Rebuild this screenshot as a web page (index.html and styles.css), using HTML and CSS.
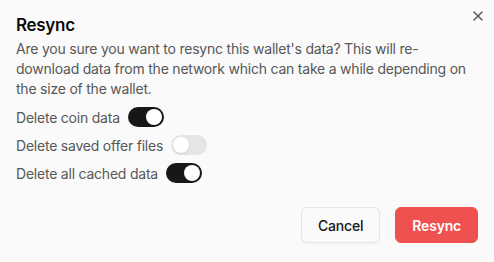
FILE: index.html
```html
<!DOCTYPE html>
<html>
<head>
<meta charset="utf-8">
<link rel="stylesheet" href="styles.css">
</head>
<body>
<div class="dialog">
  <button class="close" aria-label="Close">
    <svg width="16" height="16" viewBox="0 0 24 24" fill="none" stroke="currentColor" stroke-width="2" stroke-linecap="round" stroke-linejoin="round"><path d="M18 6 6 18"/><path d="m6 6 12 12"/></svg>
  </button>
  <h2 class="title">Resync</h2>
  <p class="desc">Are you sure you want to resync this wallet's data? This will re-download data from the network which can take a while depending on the size of the wallet.</p>
  <div class="options">
    <label class="row">Delete coin data <span class="switch on"><span class="thumb"></span></span></label>
    <label class="row">Delete saved offer files <span class="switch"><span class="thumb"></span></span></label>
    <label class="row">Delete all cached data <span class="switch on"><span class="thumb"></span></span></label>
  </div>
  <div class="footer">
    <button class="btn outline">Cancel</button>
    <button class="btn destructive">Resync</button>
  </div>
</div>
</body>
</html>
```
FILE: styles.css
```css
* { box-sizing: border-box; }
html, body { margin: 0; padding: 0; }
body {
  background: #fafafa;
  font-family: Inter, "Noto Sans", sans-serif;
  letter-spacing: -0.22px;
  width: 494px;
  height: 262px;
  overflow: hidden;
}
.dialog {
  position: relative;
  padding: 11px 16px 19px 16px;
  display: flex;
  flex-direction: column;
}
.close {
  position: absolute;
  top: 8px;
  right: 8px;
  width: 16px;
  height: 16px;
  padding: 0;
  border: 0;
  background: none;
  color: #555;
  display: flex;
}
.title {
  margin: 0;
  font-size: 17px;
  line-height: 28px;
  font-weight: 600;
  color: #0a0a0a;
  letter-spacing: -0.3px;
}
.desc {
  margin: 0;
  font-size: 14px;
  line-height: 20px;
  color: #575757;
}
.options {
  margin-top: 8px;
  display: flex;
  flex-direction: column;
  gap: 8px;
}
.row {
  display: flex;
  align-items: center;
  gap: 8px;
  height: 20px;
  font-size: 14px;
  color: #575757;
}
.switch {
  width: 36px;
  height: 20px;
  border-radius: 10px;
  border: 2px solid transparent;
  background: #e5e5e5;
  display: flex;
  align-items: center;
}
.switch.on { background: #171717; }
.thumb {
  width: 16px;
  height: 16px;
  border-radius: 50%;
  background: #fff;
  box-shadow: 0 1px 2px rgba(0,0,0,0.1);
}
.switch.on .thumb { margin-left: 16px; }
.footer {
  margin-top: 24px;
  display: flex;
  justify-content: flex-end;
  gap: 15px;
}
.btn {
  height: 36px;
  padding: 0 16px;
  border-radius: 6px;
  font-family: inherit;
  font-size: 14px;
  font-weight: 500;
  letter-spacing: -0.2px;
}
.outline {
  background: #fafafa;
  border: 1px solid #e5e5e5;
  color: #171717;
  box-shadow: 0 1px 2px rgba(0,0,0,0.04);
}
.destructive {
  background: #ef5050;
  border: 1px solid #ef5050;
  color: #fff;
  font-weight: 600;
}
```
